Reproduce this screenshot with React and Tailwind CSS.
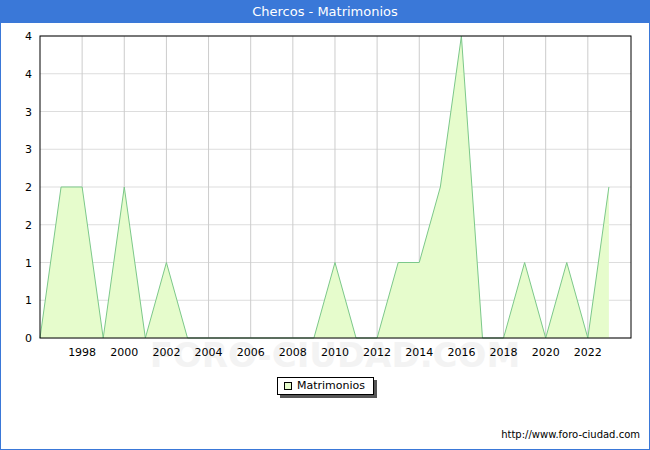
export default function App(){
const data=[0,2,2,0,2,0,1,0,0,0,0,0,0,0,1,0,0,1,1,2,4,0,0,1,0,1,0,2];
const X=i=>40+i*21.07, Y=v=>337-v*75.5;
const pts=data.map((v,i)=>`${X(i)},${Y(v)}`).join(' ');
const area=`${X(0)},337 ${pts} ${X(27)},337`;
const ylab=['0','1','1','2','2','3','3','4','4'];
return(<div className="w-[650px] h-[450px] bg-white border border-[#3a78d8] flex flex-col" style={{fontFamily:'"DejaVu Sans",sans-serif'}}>
<div className="h-[22px] bg-[#3a78d8] text-white text-[13px] flex items-center justify-center">Chercos - Matrimonios</div>
<div className="relative flex-1">
<svg width="648" height="426" className="absolute left-0 top-0">
<g transform="translate(-1,-22)">
<text x="335" y="366" fontSize="34" textAnchor="middle" fill="#f3f3f3" fontWeight="bold">FORO-CIUDAD.COM</text>
{ylab.map((l,i)=>(<g key={i}><line x1="40" x2="631" y1={337-i*37.75} y2={337-i*37.75} stroke="#dddddd"/><text x="32" y={341-i*37.75} fontSize="11" textAnchor="end" fill="#000">{l}</text></g>))}
{Array.from({length:13},(_,k)=>{const x=X(2+2*k);return(<g key={k}><line x1={x} x2={x} y1="35" y2="337" stroke="#cccccc"/><text x={x} y="355" fontSize="11" textAnchor="middle">{1998+2*k}</text></g>)})}
<polygon points={area} fill="#e6fccc"/>
<polyline points={pts} fill="none" stroke="#7cc88a" strokeWidth="1"/>
<rect x="40" y="35" width="591" height="302" fill="none" stroke="#000"/>
</g>
</svg>
<div className="absolute left-[276px] top-[354px] w-[97px] h-[18px] bg-white border border-[#000] shadow-[3px_3px_0_#555] flex items-center gap-[5px] px-[6px] text-[11px]">
<div className="w-[8px] h-[8px] bg-[#e6fccc] border border-[#000]"></div>Matrimonios</div>
<div className="absolute right-[9px] top-[404px] text-[10px]">http://www.foro-ciudad.com</div>
</div>
</div>);}
